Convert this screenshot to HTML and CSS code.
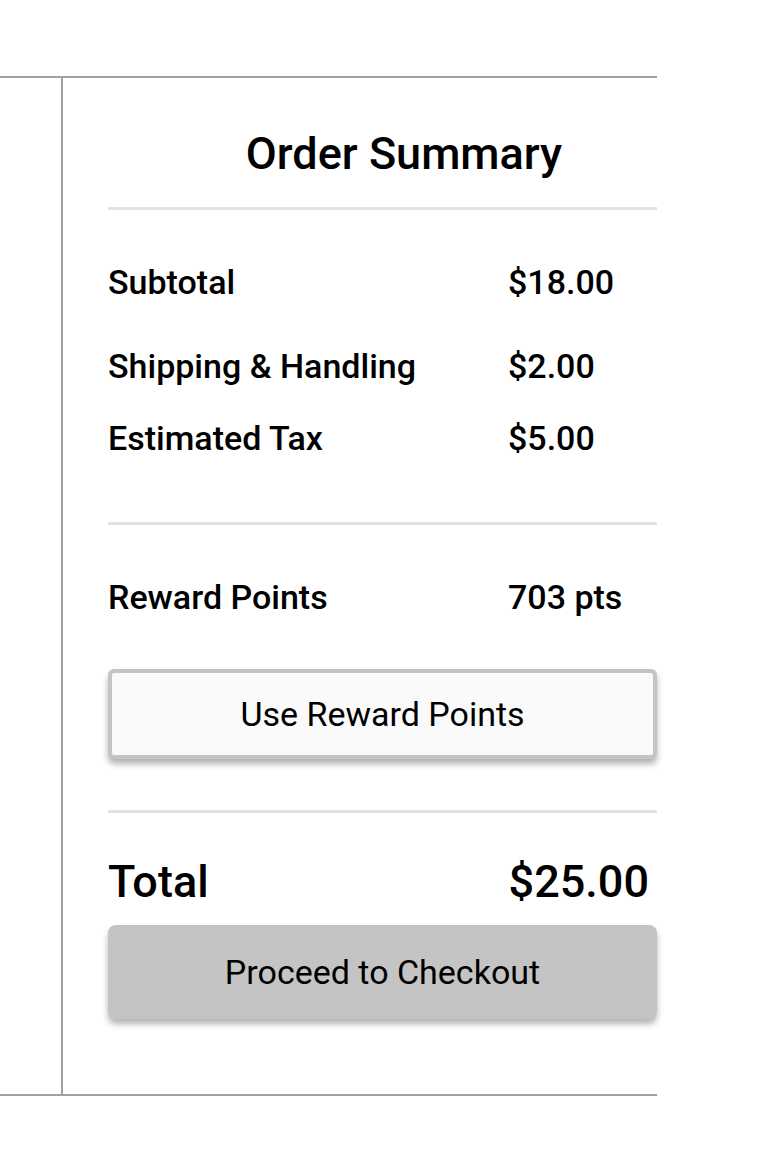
FILE: index.html
```html
<!DOCTYPE html>
<html lang="en">
<head>
<meta charset="utf-8">
<title>Order Summary</title>
<link rel="stylesheet" href="styles.css">
</head>
<body>
<div class="frame">
  <div class="side"></div>
  <section class="summary">
    <h2 class="title">Order Summary</h2>
    <hr class="divider divider-title">
    <div class="row row-subtotal"><span class="label">Subtotal</span><span class="value">$18.00</span></div>
    <div class="row row-shipping"><span class="label">Shipping &amp; Handling</span><span class="value">$2.00</span></div>
    <div class="row row-tax"><span class="label">Estimated Tax</span><span class="value">$5.00</span></div>
    <hr class="divider divider-mid">
    <div class="row row-reward"><span class="label">Reward Points</span><span class="value">703 pts</span></div>
    <button class="btn btn-reward" type="button">Use Reward Points</button>
    <hr class="divider divider-total">
    <div class="total-row"><span class="total-label">Total</span><span class="total-value">$25.00</span></div>
    <button class="btn btn-checkout" type="button">Proceed to Checkout</button>
  </section>
</div>
</body>
</html>
```
FILE: styles.css
```css
html, body {
  margin: 0;
  padding: 0;
  background: #ffffff;
}

body {
  font-family: "Roboto", "Liberation Sans", sans-serif;
  color: #000000;
  padding-top: 76px;
}

.frame {
  display: flex;
  width: 657px;
  border-top: 2px solid #a0a0a0;
  border-bottom: 2px solid #a0a0a0;
}

.side {
  width: 61px;
  flex: none;
  border-right: 2px solid #a0a0a0;
}

.summary {
  flex: 1;
  display: flex;
  flex-direction: column;
  padding: 0 0 75px 45px;
}

.title {
  margin: 0;
  padding: 50px 0 0 43px;
  font-size: 45px;
  line-height: 52px;
  font-weight: 500;
  text-align: center;
}

.divider {
  margin: 0;
  border: 0;
  height: 3px;
  background: #e2e2e2;
}

.divider-title { margin-top: 27px; }
.divider-mid { margin-top: 64px; }
.divider-total { margin-top: 51px; }

.row {
  display: grid;
  grid-template-columns: 400px 1fr;
  font-size: 34px;
  line-height: 40px;
  font-weight: 500;
}

.row-subtotal { margin-top: 52px; }
.row-shipping { margin-top: 44px; }
.row-tax { margin-top: 32px; }
.row-reward { margin-top: 52px; }

.btn {
  display: block;
  width: 100%;
  box-sizing: border-box;
  font-family: inherit;
  color: #000000;
  font-size: 34px;
  font-weight: 400;
  text-align: center;
  cursor: pointer;
}

.btn-reward {
  margin-top: 52px;
  height: 90px;
  background: #fafafa;
  border: 4px solid #c4c4c4;
  border-radius: 6px;
  box-shadow: 0 5px 6px rgba(0, 0, 0, 0.3);
}

.total-row {
  display: flex;
  justify-content: space-between;
  margin-top: 43px;
  padding-right: 8px;
  font-size: 45px;
  line-height: 52px;
  font-weight: 500;
}

.btn-checkout {
  margin-top: 17px;
  height: 94px;
  background: #c4c4c4;
  border: 0;
  border-radius: 8px;
  box-shadow: 0 5px 6px rgba(0, 0, 0, 0.3);
}
```
